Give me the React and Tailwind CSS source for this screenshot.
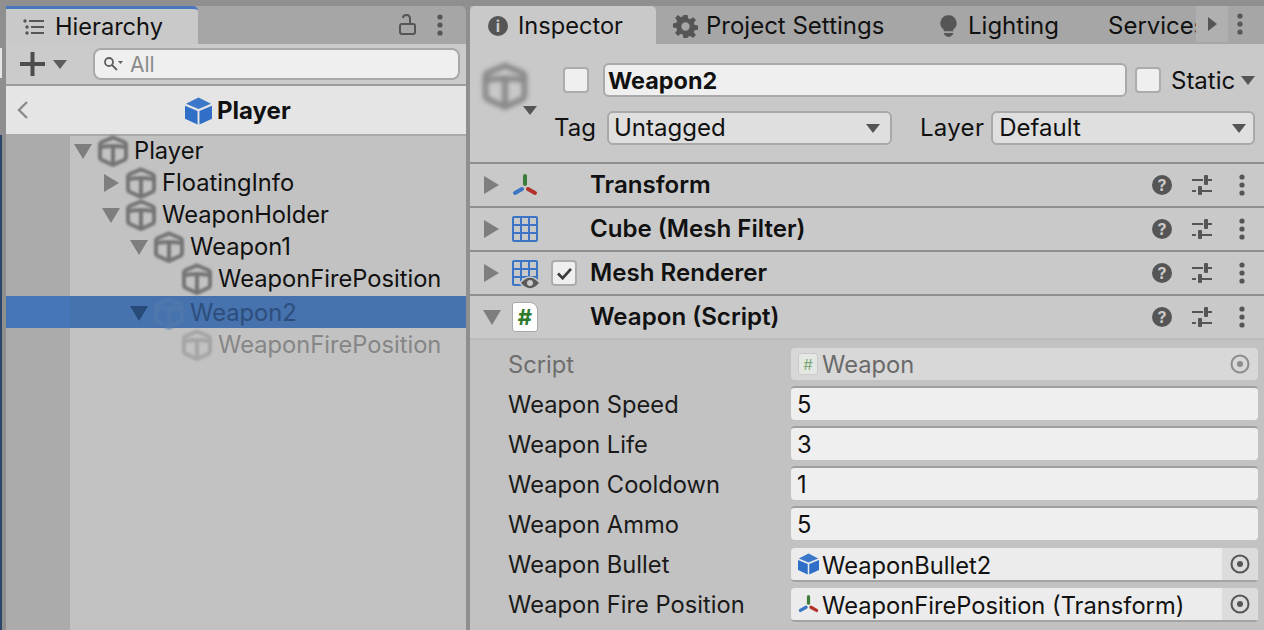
const font = { fontFamily: 'Inter, "Noto Sans", sans-serif' }

function Caret({ dir = 'down', className = '' }) {
  return (
    <svg viewBox="0 0 16 16" preserveAspectRatio="none" className={className} fill="currentColor">
      <polygon points={dir === 'down' ? '0,0 16,0 8,16' : '0,0 16,8 0,16'} />
    </svg>
  )
}

function Dots({ className = '' }) {
  return (
    <svg viewBox="0 0 6 24" className={`w-[6px] h-[24px] ${className}`} fill="currentColor">
      <circle cx="3" cy="4" r="2.6" />
      <circle cx="3" cy="12" r="2.6" />
      <circle cx="3" cy="20" r="2.6" />
    </svg>
  )
}

// the soft grey GameObject cube, blurred like a scaled-up bitmap
function BlurCube({ className = '' }) {
  return (
    <svg viewBox="0 0 30 32" className={`shrink-0 ${className}`} fill="none" stroke="currentColor" strokeWidth="4">
      <path d="M15 2.500 L26 7 Q28 8 28 10 V22 Q28 24 26 25 L15 30 L4 25 Q2 24 2 22 V10 Q2 8 4 7 Z" />
      <path d="M3 12 Q15 10 27 12 M15 12 V29" />
    </svg>
  )
}

function BlueCube({ className = '' }) {
  return (
    <svg viewBox="0 0 28 28" className={className}>
      <polygon points="14,0 27,6.500 14,12 1,6.500" fill="#3b78c9" />
      <polygon points="0,8.500 13,14 13,28 0,22" fill="#2f6fc7" />
      <polygon points="28,8.500 15,14 15,28 28,22" fill="#2f6fc7" />
    </svg>
  )
}

function TransformIcon({ className = '' }) {
  return (
    <svg viewBox="0 0 26 24" className={className} fill="none" strokeLinecap="round" strokeWidth="4">
      <path d="M13 3 V11" stroke="#3d7d3a" />
      <path d="M10 16 L3 20" stroke="#3a76c4" />
      <path d="M16 16 L23 20" stroke="#b4322c" />
    </svg>
  )
}

function GridIcon() {
  return (
    <svg viewBox="0 0 26 26" className="w-[26px] h-[26px]" fill="none" stroke="#3a76c4" strokeWidth="2">
      <rect x="1" y="1" width="24" height="24" rx="1" />
      <path d="M9 1 V25 M17 1 V25 M1 9 H25 M1 17 H25" />
    </svg>
  )
}

function ScriptIcon({ small }) {
  if (small) {
    return (
      <div className="w-[20px] h-[22px] rounded-[3px] bg-[#e4e8e2] border border-[#c9c9c9] flex items-center justify-center text-[15px] leading-none text-[#7fa87c] shrink-0">#</div>
    )
  }
  return (
    <div className="w-[26px] h-[30px] rounded-[3px] rounded-tr-[8px] bg-white border border-[#a9a9a9] flex items-center justify-center text-[22px] font-bold leading-none text-[#2f7a2b]">#</div>
  )
}

function TargetIcon({ faded }) {
  return (
    <svg viewBox="0 0 20 20" className={`w-[20px] h-[20px] ${faded ? 'text-[#8c8c8c]' : 'text-[#555555]'}`} fill="none" stroke="currentColor" strokeWidth="2">
      <circle cx="10" cy="10" r="8.500" />
      <circle cx="10" cy="10" r="3" fill="currentColor" stroke="none" />
    </svg>
  )
}

function Sliders() {
  return (
    <svg viewBox="0 0 20 20" className="w-[20px] h-[20px] text-[#555555]" fill="currentColor">
      <rect x="0" y="4" width="11" height="2" />
      <rect x="12" y="0" width="4" height="10" rx="1" />
      <rect x="16" y="4" width="4" height="2" />
      <rect x="0" y="15" width="4" height="2" />
      <rect x="6" y="11" width="4" height="9" rx="1" />
      <rect x="10" y="15" width="10" height="2" />
    </svg>
  )
}

function TreeRow({ depth, label, open, leaf, tone = 'normal' }) {
  const selected = tone === 'selected'
  const faded = tone === 'faded'
  const caretColor = selected ? 'text-[#274a79]' : 'text-[#7e7e7e]'
  const iconColor = selected ? 'text-[#4f78ad]' : faded ? 'text-[#a5a5a5]' : 'text-[#757575]'
  const textColor = selected ? 'text-[#2d4e7c]' : faded ? 'text-[#868686]' : 'text-[#111111]'
  return (
    <div className={`h-[32px] flex items-center ${selected ? 'bg-[#4672ae]' : ''}`}>
      <div className={`w-[64px] h-full shrink-0 ${selected ? 'bg-[#4676b8]' : 'bg-[#ababab]'}`} />
      <div className={`flex items-center h-full ${selected || faded ? 'pt-[2px]' : 'pb-[2px]'}`} style={{ paddingLeft: depth * 28 }}>
        <div className="w-[26px] flex justify-center shrink-0">
          {!leaf && <Caret dir={open ? 'down' : 'right'} className={`${open ? 'w-[18px] h-[15px]' : 'w-[15px] h-[18px]'} ${caretColor}`} />}
        </div>
        <BlurCube className={`ml-[2px] w-[30px] h-[32px] blur-[1.2px] ${iconColor}`} />
        <span className={`ml-[6px] text-[23.7px] leading-none whitespace-nowrap ${textColor}`}>{label}</span>
      </div>
    </div>
  )
}

function Hierarchy() {
  return (
    <div className="w-[460px] flex flex-col shrink-0">
      <div className="h-[38px] bg-[#a6a6a6] flex items-stretch rounded-tr-[5px]">
        <div className="w-[192px] bg-[#c9c9c9] border-t-[3px] border-[#4a76bd] rounded-tr-[5px] flex items-center pl-[17px] gap-[10px]">
          <svg viewBox="0 0 22 16" className="w-[22px] h-[16px] text-[#555555]" fill="currentColor">
            <circle cx="2" cy="2" r="1.700" /><rect x="6" y="1" width="15" height="2" />
            <circle cx="4" cy="8" r="1.700" /><rect x="8" y="7" width="13" height="2" />
            <circle cx="4" cy="14" r="1.700" /><rect x="8" y="13" width="13" height="2" />
          </svg>
          <span className="text-[23.6px] leading-none text-[#111111]">Hierarchy</span>
        </div>
        <div className="flex-1 flex items-center justify-end pr-[23px] gap-[20px] text-[#555555]">
          <svg viewBox="0 0 18 22" className="w-[18px] h-[22px]" fill="none" stroke="currentColor" strokeWidth="2">
            <rect x="1" y="10" width="15" height="10" rx="2" />
            <path d="M11 10 V5 Q11 1 7.500 1 Q4 1 4 4" />
          </svg>
          <Dots />
        </div>
      </div>
      <div className="h-[42px] bg-[#cbcbcb] border-b-[2px] border-[#9c9c9c] flex items-center pl-[14px] pr-[6px]">
        <svg viewBox="0 0 26 26" className="w-[26px] h-[26px] text-[#4d4d4d]" fill="currentColor">
          <rect x="0" y="11" width="25" height="4" />
          <rect x="10.500" y="1" width="4" height="24" />
        </svg>
        <Caret className="ml-[7px] w-[14px] h-[9px] text-[#5c5c5c]" />
        <div className="ml-[26px] flex-1 h-[32px] rounded-[8px] border-[2px] border-[#a9a9a9] bg-[#efefef] flex items-center pl-[8px] gap-[7px]">
          <svg viewBox="0 0 20 16" className="w-[20px] h-[16px] text-[#5f5f5f]" fill="none" stroke="currentColor" strokeWidth="1.800">
            <circle cx="6" cy="6" r="4" />
            <path d="M9 9 L14 14" />
            <polygon points="15,5 20,5 17.500,8" fill="currentColor" stroke="none" />
          </svg>
          <span className="text-[21px] leading-none text-[#8a8a8a]">All</span>
        </div>
      </div>
      <div className="h-[50px] bg-[#e5e5e5] border-b-[2px] border-[#a9a9a9] flex items-center relative">
        <svg viewBox="0 0 12 18" className="absolute left-[11px] top-[15px] w-[12px] h-[18px] text-[#8a8a8a]" fill="none" stroke="currentColor" strokeWidth="2.400">
          <path d="M10 1 L2 9 L10 17" />
        </svg>
        <div className="ml-[179px] pt-[1px] flex items-center gap-[5px]">
          <BlueCube className="w-[27px] h-[28px]" />
          <span className="text-[24px] leading-none font-bold text-[#111111]">Player</span>
        </div>
      </div>
      <div className="flex-1 bg-[#c2c2c2] flex flex-col">
        <TreeRow depth={0} label="Player" open />
        <TreeRow depth={1} label="FloatingInfo" />
        <TreeRow depth={1} label="WeaponHolder" open />
        <TreeRow depth={2} label="Weapon1" open />
        <TreeRow depth={3} label="WeaponFirePosition" leaf />
        <TreeRow depth={2} label="Weapon2" open tone="selected" />
        <TreeRow depth={3} label="WeaponFirePosition" leaf tone="faded" />
        <div className="flex-1 w-[64px] bg-[#ababab]" />
      </div>
    </div>
  )
}

function CheckBox({ className = '' }) {
  return <div className={`w-[26px] h-[26px] rounded-[4px] bg-[#efefef] border-[2px] border-[#acacac] shrink-0 ${className}`} />
}

function Select({ label, className = '' }) {
  return (
    <div className={`h-[34px] rounded-[6px] bg-[#dfdfdf] border-[2px] border-[#a9a9a9] flex items-center justify-between ${className}`}>
      <span className="text-[24px] leading-none text-[#111111]">{label}</span>
      <Caret className="w-[14px] h-[9px] text-[#555555]" />
    </div>
  )
}

function ComponentRow({ label, icon, open, check }) {
  return (
    <div className="h-[44px] border-t-[2px] border-[#8f8f8f] bg-[#c9c9c9] flex items-center pl-[14px] pr-[19px]">
      <div className="w-[15px] flex justify-center shrink-0">
        <Caret dir={open ? 'down' : 'right'} className={`${open ? 'w-[18px] h-[15px] shrink-0' : 'w-[15px] h-[18px]'} text-[#7e7e7e]`} />
      </div>
      <div className="w-[28px] ml-[12px] flex justify-center shrink-0">{icon}</div>
      <div className="w-[26px] ml-[12px] shrink-0">
        {check && (
          <div className="w-[26px] h-[26px] rounded-[4px] bg-[#efefef] border-[2px] border-[#acacac] flex items-center justify-center">
            <svg viewBox="0 0 16 14" className="w-[15px] h-[13px] text-[#3d3d3d]" fill="none" stroke="currentColor" strokeWidth="3">
              <path d="M1 7 L6 12 L15 2" />
            </svg>
          </div>
        )}
      </div>
      <span className="ml-[13px] text-[24.1px] leading-none font-semibold text-[#111111] flex-1">{label}</span>
      <div className="flex items-center text-[#555555]">
        <div className="w-[20px] h-[20px] rounded-full bg-[#555555] text-[#c9c9c9] text-[16px] font-bold leading-none flex items-center justify-center">?</div>
        <div className="ml-[20px]"><Sliders /></div>
        <Dots className="ml-[27px] h-[20px]" />
      </div>
    </div>
  )
}

function Field({ label, children, box, labelColor = 'text-[#1a1a1a]' }) {
  return (
    <div className="h-[40px] flex items-start pl-[38px] pr-[6px]">
      <span className={`w-[283px] h-[38px] flex items-center text-[23.7px] leading-none shrink-0 ${labelColor}`}>{label}</span>
      <div className={`flex-1 rounded-[4px] flex items-center text-[23.7px] leading-none ${box}`}>{children}</div>
    </div>
  )
}

function NumberField({ label, value }) {
  return (
    <Field label={label} box="h-[34px] bg-[#efefef] border-t-[2px] border-[#9f9f9f]">
      <span className="pl-[6px] pt-[2px] text-[#111111]">{value}</span>
    </Field>
  )
}

function ObjectField({ label, value, icon }) {
  return (
    <Field label={label} box="mt-[2px] h-[34px] bg-[#ececec] border-b-[2px] border-[#a3a3a3]">
      <div className="w-[31px] flex justify-center shrink-0 pl-[3px]">{icon}</div>
      <span className="flex-1 pt-[3px] text-[#111111] whitespace-nowrap">{value}</span>
      <div className="w-[36px] h-full bg-[#dcdcdc] rounded-tr-[4px] flex items-center justify-center"><TargetIcon /></div>
    </Field>
  )
}

function Inspector() {
  return (
    <div className="flex-1 flex flex-col min-w-0">
      <div className="h-[38px] bg-[#a6a6a6] flex items-stretch">
        <div className="w-[186px] bg-[#c9c9c9] rounded-t-[5px] flex items-center pl-[18px] pt-[2px] gap-[10px]">
          <div className="w-[20px] h-[20px] rounded-full bg-[#555555] text-[#c9c9c9] text-[16px] font-bold leading-none flex items-center justify-center">i</div>
          <span className="text-[23.6px] leading-none text-[#111111]">Inspector</span>
        </div>
        <div className="w-[252px] flex items-center pl-[17px] pt-[2px] gap-[8px]">
          <svg viewBox="0 0 24 24" className="w-[25px] h-[25px] text-[#555555]" fill="currentColor">
            <path fillRule="evenodd" d="M10 1h4l.6 3.200 2 .8L19.300 3 22 5.800l-2 2.700.8 2 3.200.5v4l-3.200.5-.8 2 2 2.700-2.800 2.800-2.700-2-2 .8L14 23h-4l-.5-3.200-2-.8-2.700 2L2 18.200l2-2.700-.8-2L0 13V9l3.200-.5.8-2-2-2.700L4.800 1l2.700 2 2-.8zM12 8a4 4 0 1 0 0 8 4 4 0 0 0 0-8z" />
          </svg>
          <span className="text-[24px] leading-none text-[#111111] whitespace-nowrap">Project Settings</span>
        </div>
        <div className="w-[200px] flex items-center pl-[32px] pt-[2px] gap-[11px]">
          <svg viewBox="0 0 18 24" className="w-[17px] h-[23px] text-[#555555]" fill="currentColor">
            <path d="M9 0a8.500 8.500 0 0 1 5 15.400V17H4v-1.600A8.500 8.500 0 0 1 9 0z" />
            <path d="M4 19h10q-1 4-5 4t-5-4z" />
          </svg>
          <span className="text-[24px] leading-none text-[#111111]">Lighting</span>
        </div>
        <div className="flex items-center w-[88px] pt-[2px] overflow-hidden">
          <span className="text-[24px] leading-none text-[#111111] whitespace-nowrap">Services</span>
        </div>
        <div className="w-[32px] h-[36px] bg-[#b0b0b0] flex items-center justify-center">
          <Caret dir="right" className="w-[9px] h-[14px] text-[#555555]" />
        </div>
        <div className="flex-1 flex items-center pl-[9px] pb-[2px] text-[#555555]"><Dots className="h-[20px]" /></div>
      </div>
      <div className="h-[118px] bg-[#c9c9c9] flex flex-col">
        <div className="h-[54px] flex items-center relative pl-[93px] pt-[18px]">
          <BlurCube className="absolute left-[12px] top-[18px] w-[46px] h-[48px] blur-[2px] text-[#8a8a8a]" />
          <Caret className="absolute left-[53px] top-[62px] w-[14px] h-[9px] text-[#555555]" />
          <CheckBox />
          <div className="ml-[14px] w-[524px] h-[34px] rounded-[6px] bg-[#efefef] border-[2px] border-[#a9a9a9] flex items-center pl-[3px] pt-[1px] text-[23.4px] leading-none font-bold text-[#111111]">Weapon2</div>
          <CheckBox className="ml-[8px]" />
          <span className="ml-[10px] pt-[2px] text-[24px] leading-none text-[#111111]">Static</span>
          <Caret className="ml-[6px] w-[14px] h-[9px] text-[#555555]" />
        </div>
        <div className="flex items-center h-[60px] pl-[85px]">
          <span className="text-[24px] leading-none text-[#111111] w-[52px] -ml-[1px]">Tag</span>
          <div className="ml-[1px] w-[285px]"><Select label="Untagged" className="pl-[5px] pr-[10px]" /></div>
          <span className="ml-[28px] text-[24px] leading-none text-[#111111] tracking-[0.3px]">Layer</span>
          <div className="ml-[7px] w-[264px]"><Select label="Default" className="pl-[6px] pr-[7px]" /></div>
        </div>
      </div>
      <ComponentRow label="Transform" icon={<TransformIcon className="w-[26px] h-[24px]" />} />
      <ComponentRow label="Cube (Mesh Filter)" icon={<GridIcon />} />
      <ComponentRow
        label="Mesh Renderer"
        check
        icon={
          <div className="relative">
            <GridIcon />
            <svg viewBox="0 0 22 16" className="absolute left-[7px] top-[15px] w-[22px] h-[16px]">
              <path d="M1 8 Q11 -4 21 8 Q11 20 1 8z" fill="#5a5a5a" stroke="#c9c9c9" strokeWidth="1.500" />
              <circle cx="11" cy="8" r="3" fill="#c9c9c9" />
            </svg>
          </div>
        }
      />
      <ComponentRow label="Weapon (Script)" open icon={<ScriptIcon />} />
      <div className="flex-1 bg-[#c2c2c2] border-t-[2px] border-[#bcbcbc] pt-[6px] flex flex-col">
        <Field label="Script" box="mt-[2px] h-[32px] bg-[#d8d8d8]" labelColor="text-[#6e6e6e]">
          <div className="w-[31px] flex justify-center shrink-0 pl-[3px]"><ScriptIcon small /></div>
          <span className="flex-1 pt-[2px] text-[#6a6a6a]">Weapon</span>
          <div className="w-[36px] flex justify-center"><TargetIcon faded /></div>
        </Field>
        <NumberField label="Weapon Speed" value="5" />
        <NumberField label="Weapon Life" value="3" />
        <NumberField label="Weapon Cooldown" value="1" />
        <NumberField label="Weapon Ammo" value="5" />
        <ObjectField label="Weapon Bullet" value="WeaponBullet2" icon={<BlueCube className="w-[21px] h-[22px]" />} />
        <ObjectField label="Weapon Fire Position" value="WeaponFirePosition (Transform)" icon={<TransformIcon className="w-[21px] h-[20px]" />} />
      </div>
    </div>
  )
}

export default function App() {
  return (
    <div className="w-[1264px] h-[630px] overflow-hidden bg-[#8f8f8f] pt-[6px] flex" style={font}>
      {/* sliver of the window behind the panels */}
      <div className="w-[6px] shrink-0 -mt-[6px]">
        <div className="w-[2px] h-full flex flex-col">
          <div className="h-[48px]" />
          <div className="h-[30px] bg-[#e6e6e6]" />
          <div className="h-[57px]" />
          <div className="flex-1 bg-[#2c4568]" />
        </div>
      </div>
      <Hierarchy />
      <div className="w-[4px] shrink-0" />
      <Inspector />
    </div>
  )
}
